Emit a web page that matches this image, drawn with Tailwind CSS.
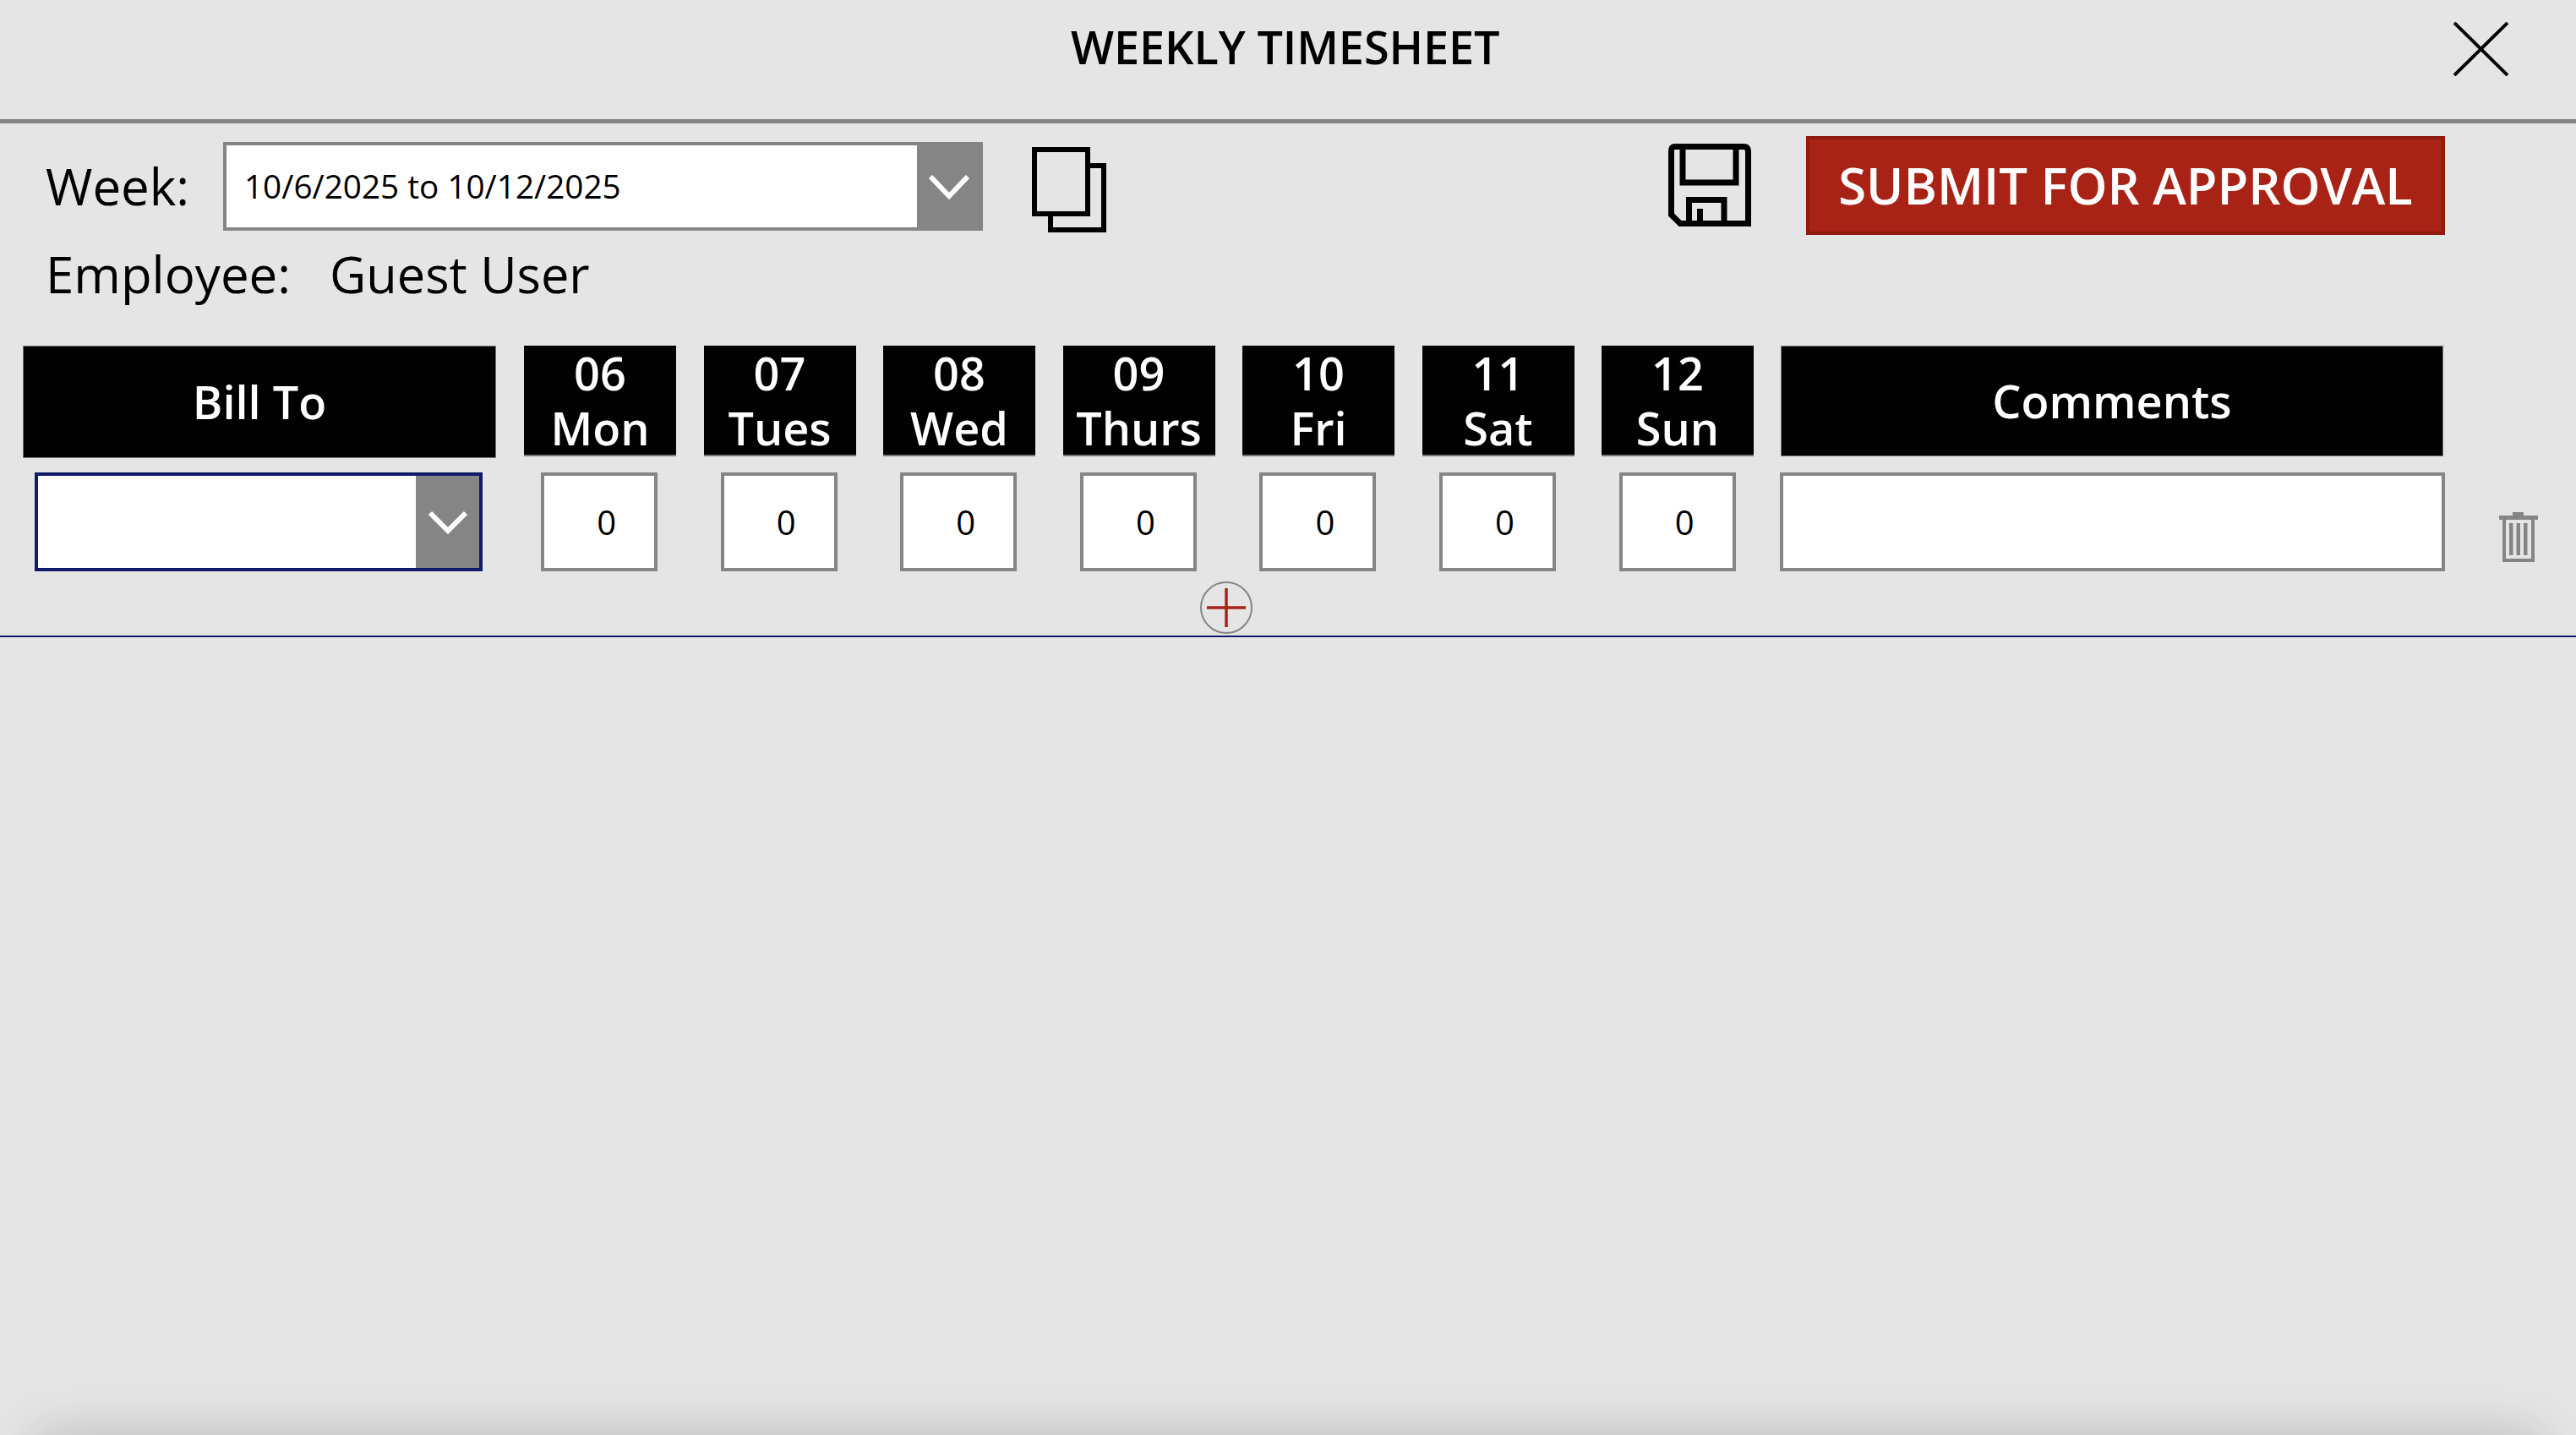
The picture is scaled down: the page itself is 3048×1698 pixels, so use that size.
<!DOCTYPE html>
<html lang="en">
  <head>
    <meta charset="UTF-8" />
    <title>Weekly Timesheet</title>
    <script src="https://cdn.jsdelivr.net/npm/@tailwindcss/browser@4"></script>
  </head>
  <body class="relative w-[3048px] h-[1698px] overflow-hidden bg-[#e5e5e5] text-black font-['Open_Sans',sans-serif]">
    <!-- title bar -->
    <header class="flex items-start h-[146px] border-b-[5px] border-[#858585]">
      <h1 class="ml-[1267px] mt-[25px] text-[54px] leading-[60px] font-semibold whitespace-nowrap tracking-[-0.1px]">WEEKLY TIMESHEET</h1>
      <svg class="ml-auto mr-[80px] mt-[26px]" width="65" height="64" viewBox="0 0 65 64" fill="none" stroke="#000" stroke-width="4">
        <path d="M1 1 L64 63 M64 1 L1 63" />
      </svg>
    </header>

    <!-- week picker and actions -->
    <section class="flex items-start pt-[15px] pl-[54px]">
      <div class="w-[210px] mt-[29px] text-[60px] leading-[60px]">Week:</div>
      <div class="flex w-[899px] h-[105px] mt-[7px] border-4 border-[#858585] bg-white">
        <div class="flex-1 flex items-center pl-[21px] text-[38.700px]">10/6/2025 to 10/12/2025</div>
        <div class="flex items-center justify-center w-[74px] pl-[2px] bg-[#858585]">
          <svg width="50" height="30" viewBox="0 0 50 30" fill="none" stroke="#fff" stroke-width="6"><path d="M3 3 L25 26 L47 3" /></svg>
        </div>
      </div>
      <svg class="ml-[58px] mt-[13px]" width="88" height="101" viewBox="0 0 88 101" fill="none" stroke="#000" stroke-width="6">
        <rect x="3" y="3" width="63" height="76" />
        <path d="M66 22 H85 V98 H22 V79" />
      </svg>
      <svg class="ml-[665px] mt-[9px]" width="98" height="98" viewBox="14 20 98 98" fill="none" stroke="#000" stroke-width="7">
        <path d="M22 23.500 H103 Q108.500 23.500 108.500 29 V114.500 H28 L17.500 104 V29 Q17.500 23.500 22 23.500 Z" />
        <path d="M31 23 V66 H94 V23" />
        <path d="M38.500 114 V86.500 H80 V114" />
        <path d="M51.500 97 V114" />
      </svg>
      <button class="ml-[65px] w-[756px] h-[117px] border-4 border-[#8f1a10] bg-[#a82315] text-white text-[59.800px] font-semibold whitespace-nowrap">SUBMIT FOR APPROVAL</button>
    </section>

    <div class="flex mt-[16px] pl-[54px] text-[60px] leading-[60px]">
      <div class="w-[336px]">Employee:</div>
      <div class="text-[59.500px]">Guest User</div>
    </div>

    <!-- column headers -->
    <div class="flex items-start h-[133px] mt-[55px] pl-[27px] text-white text-[54px] leading-[65px] font-semibold text-center">
      <div class="flex items-center justify-center w-[560px] h-[133px] bg-black border border-[#777]">Bill To</div>
      <div class="flex gap-[32.500px] ml-[33px]">
        <div class="w-[180px] h-[131px] bg-black border-b-2 border-[#777]">06<br />Mon</div>
        <div class="w-[180px] h-[131px] bg-black border-b-2 border-[#777]">07<br />Tues</div>
        <div class="w-[180px] h-[131px] bg-black border-b-2 border-[#777]">08<br />Wed</div>
        <div class="w-[180px] h-[131px] bg-black border-b-2 border-[#777]">09<br />Thurs</div>
        <div class="w-[180px] h-[131px] bg-black border-b-2 border-[#777]">10<br />Fri</div>
        <div class="w-[180px] h-[131px] bg-black border-b-2 border-[#777]">11<br />Sat</div>
        <div class="w-[180px] h-[131px] bg-black border-b-2 border-[#777]">12<br />Sun</div>
      </div>
      <div class="flex items-center justify-center w-[784px] h-[131px] ml-[32px] bg-black border border-[#777]">Comments</div>
    </div>

    <!-- entry row -->
    <div class="flex items-start mt-[17px] pl-[41px]">
      <div class="flex justify-end w-[530px] h-[117px] border-4 border-[#0f1a6b] bg-white">
        <div class="flex items-center justify-center w-[75px] pl-[1px] bg-[#858585]">
          <svg width="48" height="28" viewBox="0 0 48 28" fill="none" stroke="#fff" stroke-width="6"><path d="M3 3 L24 24 L45 3" /></svg>
        </div>
      </div>
      <div class="flex gap-[74.600px] ml-[69px] text-[40px]">
        <div class="flex items-center justify-end w-[138px] h-[117px] pr-[45px] border-4 border-[#858585] bg-white">0</div>
        <div class="flex items-center justify-end w-[138px] h-[117px] pr-[45px] border-4 border-[#858585] bg-white">0</div>
        <div class="flex items-center justify-end w-[138px] h-[117px] pr-[45px] border-4 border-[#858585] bg-white">0</div>
        <div class="flex items-center justify-end w-[138px] h-[117px] pr-[45px] border-4 border-[#858585] bg-white">0</div>
        <div class="flex items-center justify-end w-[138px] h-[117px] pr-[45px] border-4 border-[#858585] bg-white">0</div>
        <div class="flex items-center justify-end w-[138px] h-[117px] pr-[45px] border-4 border-[#858585] bg-white">0</div>
        <div class="flex items-center justify-end w-[138px] h-[117px] pr-[45px] border-4 border-[#858585] bg-white">0</div>
      </div>
      <div class="w-[787px] h-[117px] ml-[52px] border-4 border-[#858585] bg-white"></div>
      <svg class="ml-[64px] mt-[47px]" width="46" height="59" viewBox="0 0 46 59" fill="#858585">
        <path d="M16 0 H29 V4 H46 V9 H42 V59 H4 V9 H0 V4 H16 Z M8 9 V55 H38 V9 Z" fill-rule="evenodd" />
        <rect x="12" y="13" width="4.500" height="38" />
        <rect x="20.500" y="13" width="4.500" height="38" />
        <rect x="29" y="13" width="4.500" height="38" />
      </svg>
    </div>

    <!-- add row -->
    <div class="mt-[12px] ml-[1420px] w-[62px] h-[62px]">
      <svg width="62" height="62" viewBox="0 0 62 62" fill="none">
        <circle cx="31" cy="31" r="30" stroke="#858585" stroke-width="2" />
        <path d="M31 8 V54 M8 31 H54" stroke="#a82315" stroke-width="3.500" />
      </svg>
    </div>
    <div class="mt-[2px] h-[2px] bg-[#0f1a6b]"></div>

    <!-- soft shadow along the bottom edge -->
    <div class="absolute left-[50px] right-[50px] top-[1708px] h-[40px] shadow-[0_0_60px_10px_rgba(0,0,0,0.2)]"></div>
  </body>
</html>
